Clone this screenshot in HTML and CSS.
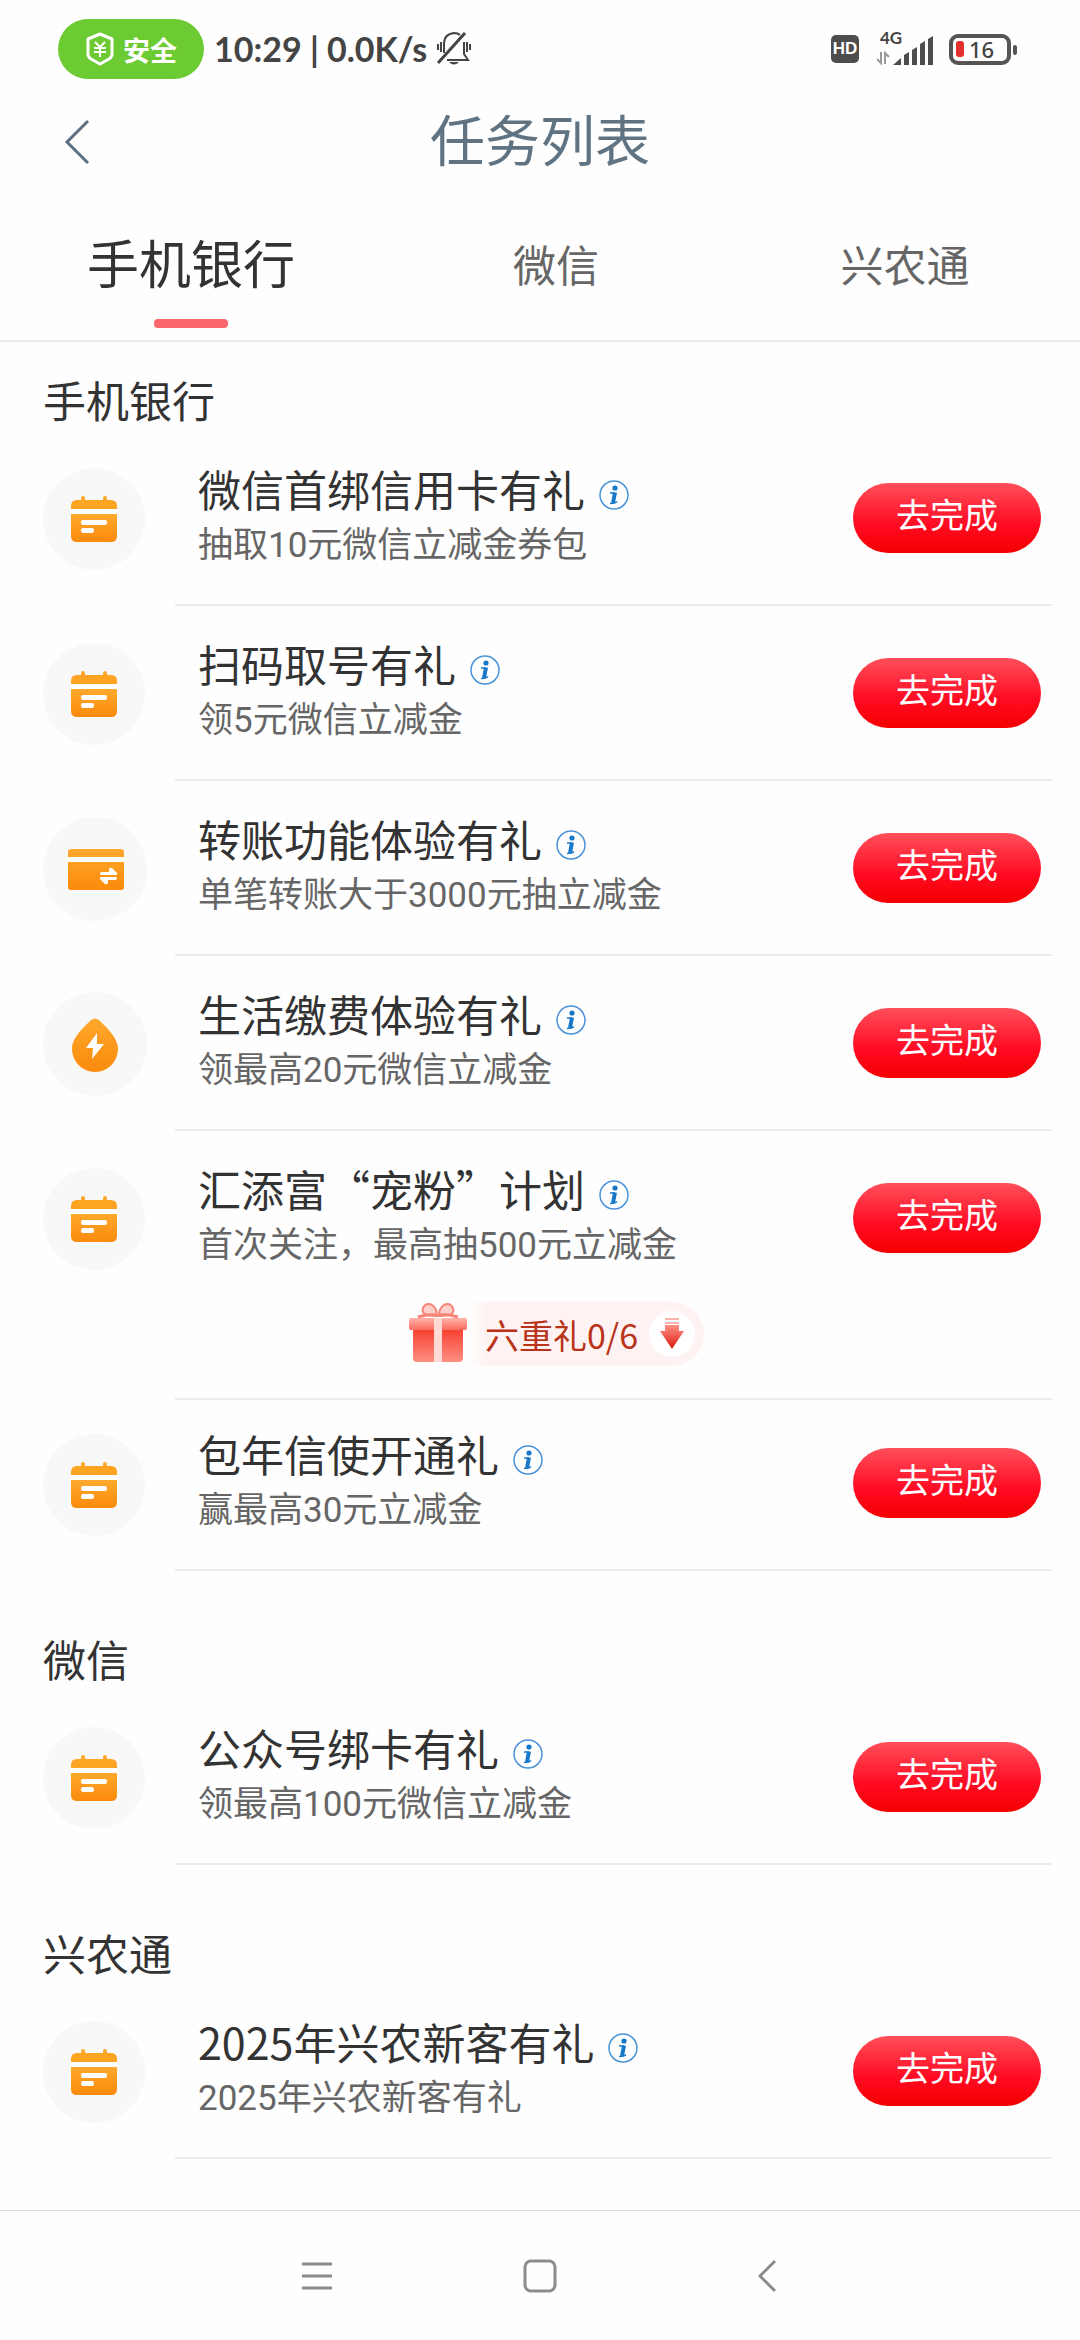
FILE: index.html
```html
<!DOCTYPE html>
<html lang="zh-CN">
<head>
<meta charset="utf-8">
<meta name="viewport" content="width=device-width, initial-scale=1">
<title>任务列表</title>
<link rel="stylesheet" href="styles.css">
</head>
<body>
<svg class="sprite" aria-hidden="true">
  <defs>
    <linearGradient id="orange" x1="0" y1="0" x2="0" y2="1">
      <stop offset="0" stop-color="#fea92d"/><stop offset="1" stop-color="#fb8a0c"/>
    </linearGradient>
    <linearGradient id="box" x1="0" y1="0" x2="0" y2="1">
      <stop offset="0" stop-color="#f63b2b"/><stop offset="1" stop-color="#ff8f82"/>
    </linearGradient>
    <linearGradient id="lid" x1="0" y1="0" x2="0" y2="1">
      <stop offset="0" stop-color="#ffb3aa"/><stop offset="1" stop-color="#fb6c5f"/>
    </linearGradient>
    <linearGradient id="arrow" x1="0" y1="0" x2="0" y2="1">
      <stop offset="0" stop-color="#ff9188"/><stop offset="1" stop-color="#dd1a0c"/>
    </linearGradient>
    <symbol id="calendar" viewBox="1 0 104 104">
      <circle cx="52" cy="52" r="51" fill="#f8f8f8"/>
      <rect x="39" y="29" width="4" height="9" rx="2" fill="#fea92d"/>
      <rect x="61" y="29" width="4" height="9" rx="2" fill="#fea92d"/>
      <path fill="#fea423" d="M35 33h34q6 0 6 6v3H29v-3q0-6 6-6z"/>
      <path fill="#fff" d="M29 42h46v5H29z"/>
      <path fill="url(#orange)" d="M29 47h46v22q0 6-6 6H35q-6 0-6-6z"/>
      <rect x="39" y="53" width="26" height="5" rx="2" fill="#fff"/>
      <rect x="39" y="61" width="13" height="5" rx="2" fill="#fff"/>
    </symbol>
    <symbol id="transfer" viewBox="0 0 104 104">
      <circle cx="52" cy="52" r="52" fill="#f8f8f8"/>
      <rect x="25" y="32" width="56" height="41" rx="3" fill="url(#orange)"/>
      <path fill="#fff" d="M25 40h56v5H25z"/>
      <path fill="#fff" d="M58 55h8v-2q0-3 3-2l5 5q1 2-1 2H58q-2-1 0-3zM73 63h-8v2q0 3-3 2l-5-5q-1-2 1-2h15q2 1 0 3z"/>
    </symbol>
    <symbol id="power" viewBox="0 0 104 104">
      <circle cx="52" cy="52" r="52" fill="#f8f8f8"/>
      <path fill="url(#orange)" d="M48 28q4-3 8 0C62 34 75 45 75 57a23 23 0 0 1-46 0C29 45 42 34 48 28z"/>
      <path fill="#fff" d="M54 41L43 56h7l-1 11 12-15h-7z"/>
    </symbol>
    <symbol id="info" viewBox="0 0 30 30">
      <circle cx="15" cy="15" r="14" fill="none" stroke="#4a93d9" stroke-width="1.500"/>
      <circle cx="16" cy="8" r="2.600" fill="#1878c8"/>
      <path fill="none" stroke="#1878c8" stroke-width="1.500" d="M11 13h5M11 23.500q5 0 7-2"/>
      <path fill="none" stroke="#1878c8" stroke-width="4" d="M16 12.500L14 23"/>
    </symbol>
  </defs>
</svg>

<div class="page">
  <div class="status">
    <span class="safe">
      <svg width="30" height="34" viewBox="0 0 30 34"><path d="M15 2l12 5v15q0 3-3 5l-9 5-9-5q-3-2-3-5V7z" fill="none" stroke="#fff" stroke-width="3" stroke-linejoin="round"/><path d="M10 10l5 5 5-5M9 16h12M9 20h12M15 15v10" fill="none" stroke="#fff" stroke-width="2"/></svg>
      安全
    </span>
    <span class="clock">10:29 | 0.0K/s</span>
    <svg class="mute" width="36" height="36" viewBox="0 0 36 36"><g fill="none" stroke="#444" stroke-width="2"><path d="M8 22V13q0-10 10-11 4 0 6 2M28 11v12l4 6H11"/><path d="M2 32L29 2" stroke-width="3"/><path d="M5 11v10M2 13v6M31 11v10M34 13v6"/></g><path d="M13 31h10q-5 5-10 0z" fill="#444"/></svg>
    <span class="hd">HD</span>
    <span class="net">
      <span class="gen">4G</span>
      <svg width="56" height="32" viewBox="0 0 56 32"><path d="M4 17v11l-4-4M8 29V18l4 4" fill="none" stroke="#999" stroke-width="2"/><path fill="#4d4d4d" d="M16 30l8-7v7zM27 30V20l5-3v13zM35 30V15l5-3v18zM43 30V9l5-3v24zM51 30V4l5-3v29z"/></svg>
    </span>
    <span class="battery"><span class="charge"></span>16</span>
  </div>

  <header class="bar">
    <button class="back" aria-label="返回"><svg width="26" height="46" viewBox="0 0 26 46"><path d="M24 2L3 23l21 21" fill="none" stroke="#5b7183" stroke-width="3"/></svg></button>
    <h1>任务列表</h1>
  </header>

  <nav class="tabs">
    <a class="tab active" href="#bank">手机银行</a>
    <a class="tab" href="#wechat">微信</a>
    <a class="tab" href="#xnt">兴农通</a>
  </nav>

  <main>
    <section id="bank">
      <h2>手机银行</h2>
      <article class="task">
        <svg class="icon"><use href="#calendar"/></svg>
        <div class="body">
          <div class="text"><h3>微信首绑信用卡有礼<svg class="info"><use href="#info"/></svg></h3><p>抽取10元微信立减金券包</p></div>
          <button class="go">去完成</button>
        </div>
      </article>
      <article class="task">
        <svg class="icon"><use href="#calendar"/></svg>
        <div class="body">
          <div class="text"><h3>扫码取号有礼<svg class="info"><use href="#info"/></svg></h3><p>领5元微信立减金</p></div>
          <button class="go">去完成</button>
        </div>
      </article>
      <article class="task">
        <svg class="icon"><use href="#transfer"/></svg>
        <div class="body">
          <div class="text"><h3>转账功能体验有礼<svg class="info"><use href="#info"/></svg></h3><p>单笔转账大于3000元抽立减金</p></div>
          <button class="go">去完成</button>
        </div>
      </article>
      <article class="task">
        <svg class="icon"><use href="#power"/></svg>
        <div class="body">
          <div class="text"><h3>生活缴费体验有礼<svg class="info"><use href="#info"/></svg></h3><p>领最高20元微信立减金</p></div>
          <button class="go">去完成</button>
        </div>
      </article>
      <article class="task with-gift">
        <svg class="icon"><use href="#calendar"/></svg>
        <div class="body">
          <div class="text"><h3>汇添富“宠粉”计划<svg class="info"><use href="#info"/></svg></h3><p>首次关注，最高抽500元立减金</p></div>
          <button class="go">去完成</button>
          <button class="gift">
            <svg width="60" height="62" viewBox="0 0 60 62"><rect x="5" y="25" width="50" height="35" rx="4" fill="url(#box)"/><rect x="1" y="16" width="58" height="12" rx="2" fill="url(#lid)"/><path d="M26 16h8v44h-8z" fill="#ffd9d4"/><g fill="#ffd0ca" stroke="#f98376" stroke-width="2"><path d="M29 14Q12 14 15 6q3-6 9-3 5 3 5 11z"/><path d="M31 14q17 0 14-8-3-6-9-3-5 3-5 11z"/></g><path d="M28 13q-8-1-18 2M32 13q8-1 18 2" fill="none" stroke="#f98376" stroke-width="3"/></svg>
            <span class="pill">六重礼0/6
              <svg width="46" height="46" viewBox="0 0 46 46"><circle cx="23" cy="23" r="23" fill="#fff"/><path d="M16 7h14v2H16zM16 11h14v2H16z" fill="#ffb5ae"/><path d="M16 14h14v6h5L23 38 11 20h5z" fill="url(#arrow)"/></svg>
            </span>
          </button>
        </div>
      </article>
      <article class="task">
        <svg class="icon"><use href="#calendar"/></svg>
        <div class="body">
          <div class="text"><h3>包年信使开通礼<svg class="info"><use href="#info"/></svg></h3><p>赢最高30元立减金</p></div>
          <button class="go">去完成</button>
        </div>
      </article>
    </section>
    <section id="wechat">
      <h2>微信</h2>
      <article class="task">
        <svg class="icon"><use href="#calendar"/></svg>
        <div class="body">
          <div class="text"><h3>公众号绑卡有礼<svg class="info"><use href="#info"/></svg></h3><p>领最高100元微信立减金</p></div>
          <button class="go">去完成</button>
        </div>
      </article>
    </section>
    <section id="xnt">
      <h2>兴农通</h2>
      <article class="task">
        <svg class="icon"><use href="#calendar"/></svg>
        <div class="body">
          <div class="text"><h3>2025年兴农新客有礼<svg class="info"><use href="#info"/></svg></h3><p>2025年兴农新客有礼</p></div>
          <button class="go">去完成</button>
        </div>
      </article>
    </section>
  </main>

  <footer class="keys">
    <button aria-label="菜单"><svg width="34" height="34" viewBox="0 0 34 34"><path d="M4 5h30M4 17h30M4 29h30" stroke="#8c8c8c" stroke-width="3"/></svg></button>
    <button aria-label="主页"><svg width="34" height="34" viewBox="0 0 34 34"><rect x="2" y="2" width="30" height="30" rx="6" fill="none" stroke="#8c8c8c" stroke-width="3"/></svg></button>
    <button aria-label="返回"><svg width="34" height="34" viewBox="0 0 34 34"><path d="M27 2L12 17l15 15" fill="none" stroke="#8c8c8c" stroke-width="3" stroke-linejoin="round"/></svg></button>
  </footer>
</div>
</body>
</html>
```
FILE: styles.css
```css
* { box-sizing: border-box; margin: 0; padding: 0; }

body {
  background: #fefefe;
  color: #333;
  font-family: Roboto, "Noto Sans CJK SC", sans-serif;
}

button { border: 0; background: none; font: inherit; cursor: pointer; }
svg { display: block; flex: none; }
h1, h2, h3 { font-weight: 400; }

.sprite { position: absolute; width: 0; height: 0; }

.page { min-height: 100vh; display: flex; flex-direction: column; }

/* status bar */
.status {
  display: flex;
  align-items: center;
  height: 98px;
  padding: 0 65px 0 58px;
  color: #444;
}
.safe {
  display: flex;
  align-items: center;
  gap: 8px;
  height: 60px;
  padding: 0 27px;
  border-radius: 30px;
  background: #6ccb33;
  color: #fff;
  font-size: 27px;
  font-weight: 700;
}
.clock { margin-left: 10px; font: 700 34px/48px Lato, sans-serif; }
.mute { margin-left: 9px; }
.hd {
  width: 28px;
  height: 28px;
  margin-left: auto;
  border-radius: 5px;
  background: #4d4d4d;
  color: #fff;
  font: 700 17px/28px "Liberation Sans", sans-serif;
  text-align: center;
}
.net { display: flex; flex-direction: column; margin-left: 18px; }
.gen { height: 4px; padding-left: 3px; font: 700 17px/14px Lato, sans-serif; }
.battery {
  position: relative;
  display: flex;
  align-items: center;
  gap: 5px;
  width: 62px;
  height: 31px;
  margin: 0 4px 0 16px;
  padding-left: 3px;
  border: 4px solid #555;
  border-radius: 9px;
  font: 500 22px/24px "Noto Sans", sans-serif;
}
.battery::after {
  content: "";
  position: absolute;
  right: -10px;
  top: 7px;
  width: 4px;
  height: 10px;
  border-radius: 2px;
  background: #555;
}
.charge { width: 8px; height: 16px; border-radius: 3px; background: #e53030; }

/* title bar */
.bar {
  display: grid;
  grid-template-columns: 160px 1fr 160px;
  align-items: center;
  height: 88px;
  color: #5f7382;
}
.back { padding-left: 64px; }
.bar h1 { font-size: 55px; line-height: 80px; text-align: center; }

/* tabs */
.tabs {
  display: grid;
  grid-template-columns: 382fr 348fr 350fr;
  height: 156px;
  padding-top: 42px;
  border-bottom: 2px solid #ececec;
}
.tab {
  display: flex;
  flex-direction: column;
  align-items: center;
  color: #666;
  font-size: 43px;
  line-height: 78px;
  text-decoration: none;
}
.tab.active { color: #333; font-size: 52px; }
.active::after {
  content: "";
  width: 74px;
  height: 9px;
  margin-top: 13px;
  border-radius: 4px;
  background: #fb666d;
}

/* task list */
main { padding: 33px 28px 0 43px; }
h2 { font-size: 43px; line-height: 56px; }
section + section { margin-top: 63px; }
.task { display: flex; gap: 28px; }
.icon { width: 104px; height: 104px; margin-top: 36px; }
.body {
  flex: 1;
  display: grid;
  grid-template-columns: 1fr auto;
  padding: 27px 11px 34px 23px;
  border-bottom: 2px solid #ececec;
}
.text h3 {
  display: flex;
  align-items: center;
  gap: 14px;
  font-family: "Noto Sans CJK SC", sans-serif;
  font-size: 43px;
  line-height: 60px;
}
.text p { margin-top: 4px; color: #666; font-size: 35px; line-height: 48px; }
.info { width: 30px; height: 30px; margin-top: 14px; }
.go {
  align-self: start;
  width: 188px;
  height: 70px;
  margin-top: 25px;
  padding-bottom: 4px;
  border-radius: 35px;
  background: linear-gradient(#ff4f5a, #ff0a22 60%, #f40000);
  color: #fff;
  font-size: 34px;
  line-height: 66px;
}
.with-gift .body { padding-bottom: 32px; }
.with-gift + .task .icon { margin-top: 33px; }
.with-gift + .task .body { padding-top: 23px; }
.gift {
  grid-column: 1 / -1;
  display: flex;
  align-items: flex-start;
  margin: 32px 0 0 210px;
}
.pill {
  display: flex;
  align-items: center;
  gap: 11px;
  height: 64px;
  padding: 0 9px 0 17px;
  border-radius: 0 32px 32px 0;
  background: linear-gradient(90deg, #fefefe, #fef3f2 20px);
  color: #b9331a;
  font-family: "Noto Sans CJK SC", sans-serif;
  font-size: 34px;
}

/* system keys */
.keys {
  display: flex;
  flex: none;
  justify-content: space-between;
  align-items: center;
  height: 130px;
  margin-top: auto;
  padding: 0 298px;
  border-top: 1px solid #ddd;
}
```
